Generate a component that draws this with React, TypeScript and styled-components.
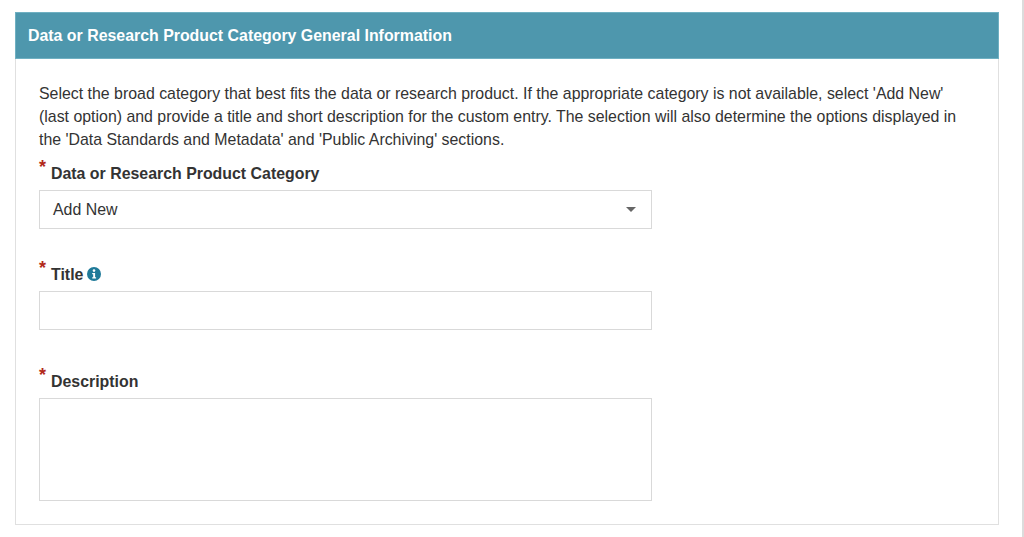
import React from "react";
import styled, { createGlobalStyle } from "styled-components";

const Global = createGlobalStyle`
  html, body { margin: 0; padding: 0; background: #fff; height: 537px; overflow: hidden; }
  body { font-family: "Liberation Sans", Arial, sans-serif; color: #333; }
`;

const Page = styled.div`
  box-sizing: border-box;
  height: 537px;
  width: 1024px;
  padding: 12px 23px 0 15px;
  border-right: 2px solid #dcdcdc;
`;

const Panel = styled.section`
  box-sizing: border-box;
  width: 984px;
  height: 513px;
  border: 1px solid #e0e0e0;
  border-top: 0;
  background: #fff;
`;

const PanelHeader = styled.h2`
  box-sizing: border-box;
  margin: 0 -1px;
  height: 47px;
  padding: 0 12px;
  display: flex;
  align-items: center;
  background: #4e97ad;
  border: 1px solid #6fb0c2;
  color: #fff;
  font-size: 15.9px;
  font-weight: 700;
`;

const PanelBody = styled.div`
  padding: 23px 23px 0;
`;

const Intro = styled.p`
  margin: 0;
  font-size: 15.9px;
  line-height: 23px;
  color: #333;
`;

const Field = styled.div<{ $top: number }>`
  margin-top: ${(p) => p.$top}px;
`;

const Label = styled.label`
  display: flex;
  align-items: center;
  height: 23px;
  font-size: 15.9px;
  font-weight: 700;
  color: #333;
  margin-bottom: 5px;
`;

const Star = styled.span`
  width: 12px;
  align-self: flex-start;
  color: #b22a1a;
  font-size: 18px;
  line-height: 17px;
  font-weight: 700;
  margin-top: -3px;
`;

const Info = styled.svg`
  width: 14px;
  height: 14px;
  margin: -2px 0 0 4px;
  flex: none;
`;

const SelectBox = styled.div`
  box-sizing: border-box;
  width: 613px;
  height: 39px;
  border: 1px solid #d9d9d9;
  padding: 0 13px;
  display: flex;
  align-items: center;
  justify-content: space-between;
  font-size: 15.9px;
  color: #333;
`;

const Caret = styled.span`
  width: 0;
  height: 0;
  margin: 0 2px 0 0;
  border-left: 5.5px solid transparent;
  border-right: 5.5px solid transparent;
  border-top: 5px solid #666;
`;

const TextInput = styled.input`
  display: block;
  box-sizing: border-box;
  width: 613px;
  height: 39px;
  border: 1px solid #d9d9d9;
  outline: none;
  background: #fff;
  padding: 0 13px;
`;

const TextArea = styled.textarea`
  display: block;
  box-sizing: border-box;
  width: 613px;
  height: 103px;
  border: 1px solid #d9d9d9;
  outline: none;
  resize: none;
  background: #fff;
  padding: 8px 13px;
`;

export default function App() {
  return (
    <>
      <Global />
      <Page>
        <Panel>
          <PanelHeader>Data or Research Product Category General Information</PanelHeader>
          <PanelBody>
            <Intro>
              Select the broad category that best fits the data or research product. If the appropriate category is not available, select 'Add New' (last option) and provide a title and short description for the custom entry. The selection will also determine the options displayed in the 'Data Standards and Metadata' and 'Public Archiving' sections.
            </Intro>
            <Field $top={11}>
              <Label><Star>*</Star>Data or Research Product Category</Label>
              <SelectBox>Add New<Caret /></SelectBox>
            </Field>
            <Field $top={34}>
              <Label>
                <Star>*</Star>Title
                <Info viewBox="0 0 14 14" aria-hidden="true">
                  <circle cx="7" cy="7" r="7" fill="#1f7a99" />
                  <circle cx="7" cy="3.6" r="1.3" fill="#fff" />
                  <path d="M5.2 6h2.9v4.2h1v1.2H5.2v-1.2h1V7.2h-1z" fill="#fff" />
                </Info>
              </Label>
              <TextInput />
            </Field>
            <Field $top={40}>
              <Label><Star>*</Star>Description</Label>
              <TextArea />
            </Field>
          </PanelBody>
        </Panel>
      </Page>
    </>
  );
}
